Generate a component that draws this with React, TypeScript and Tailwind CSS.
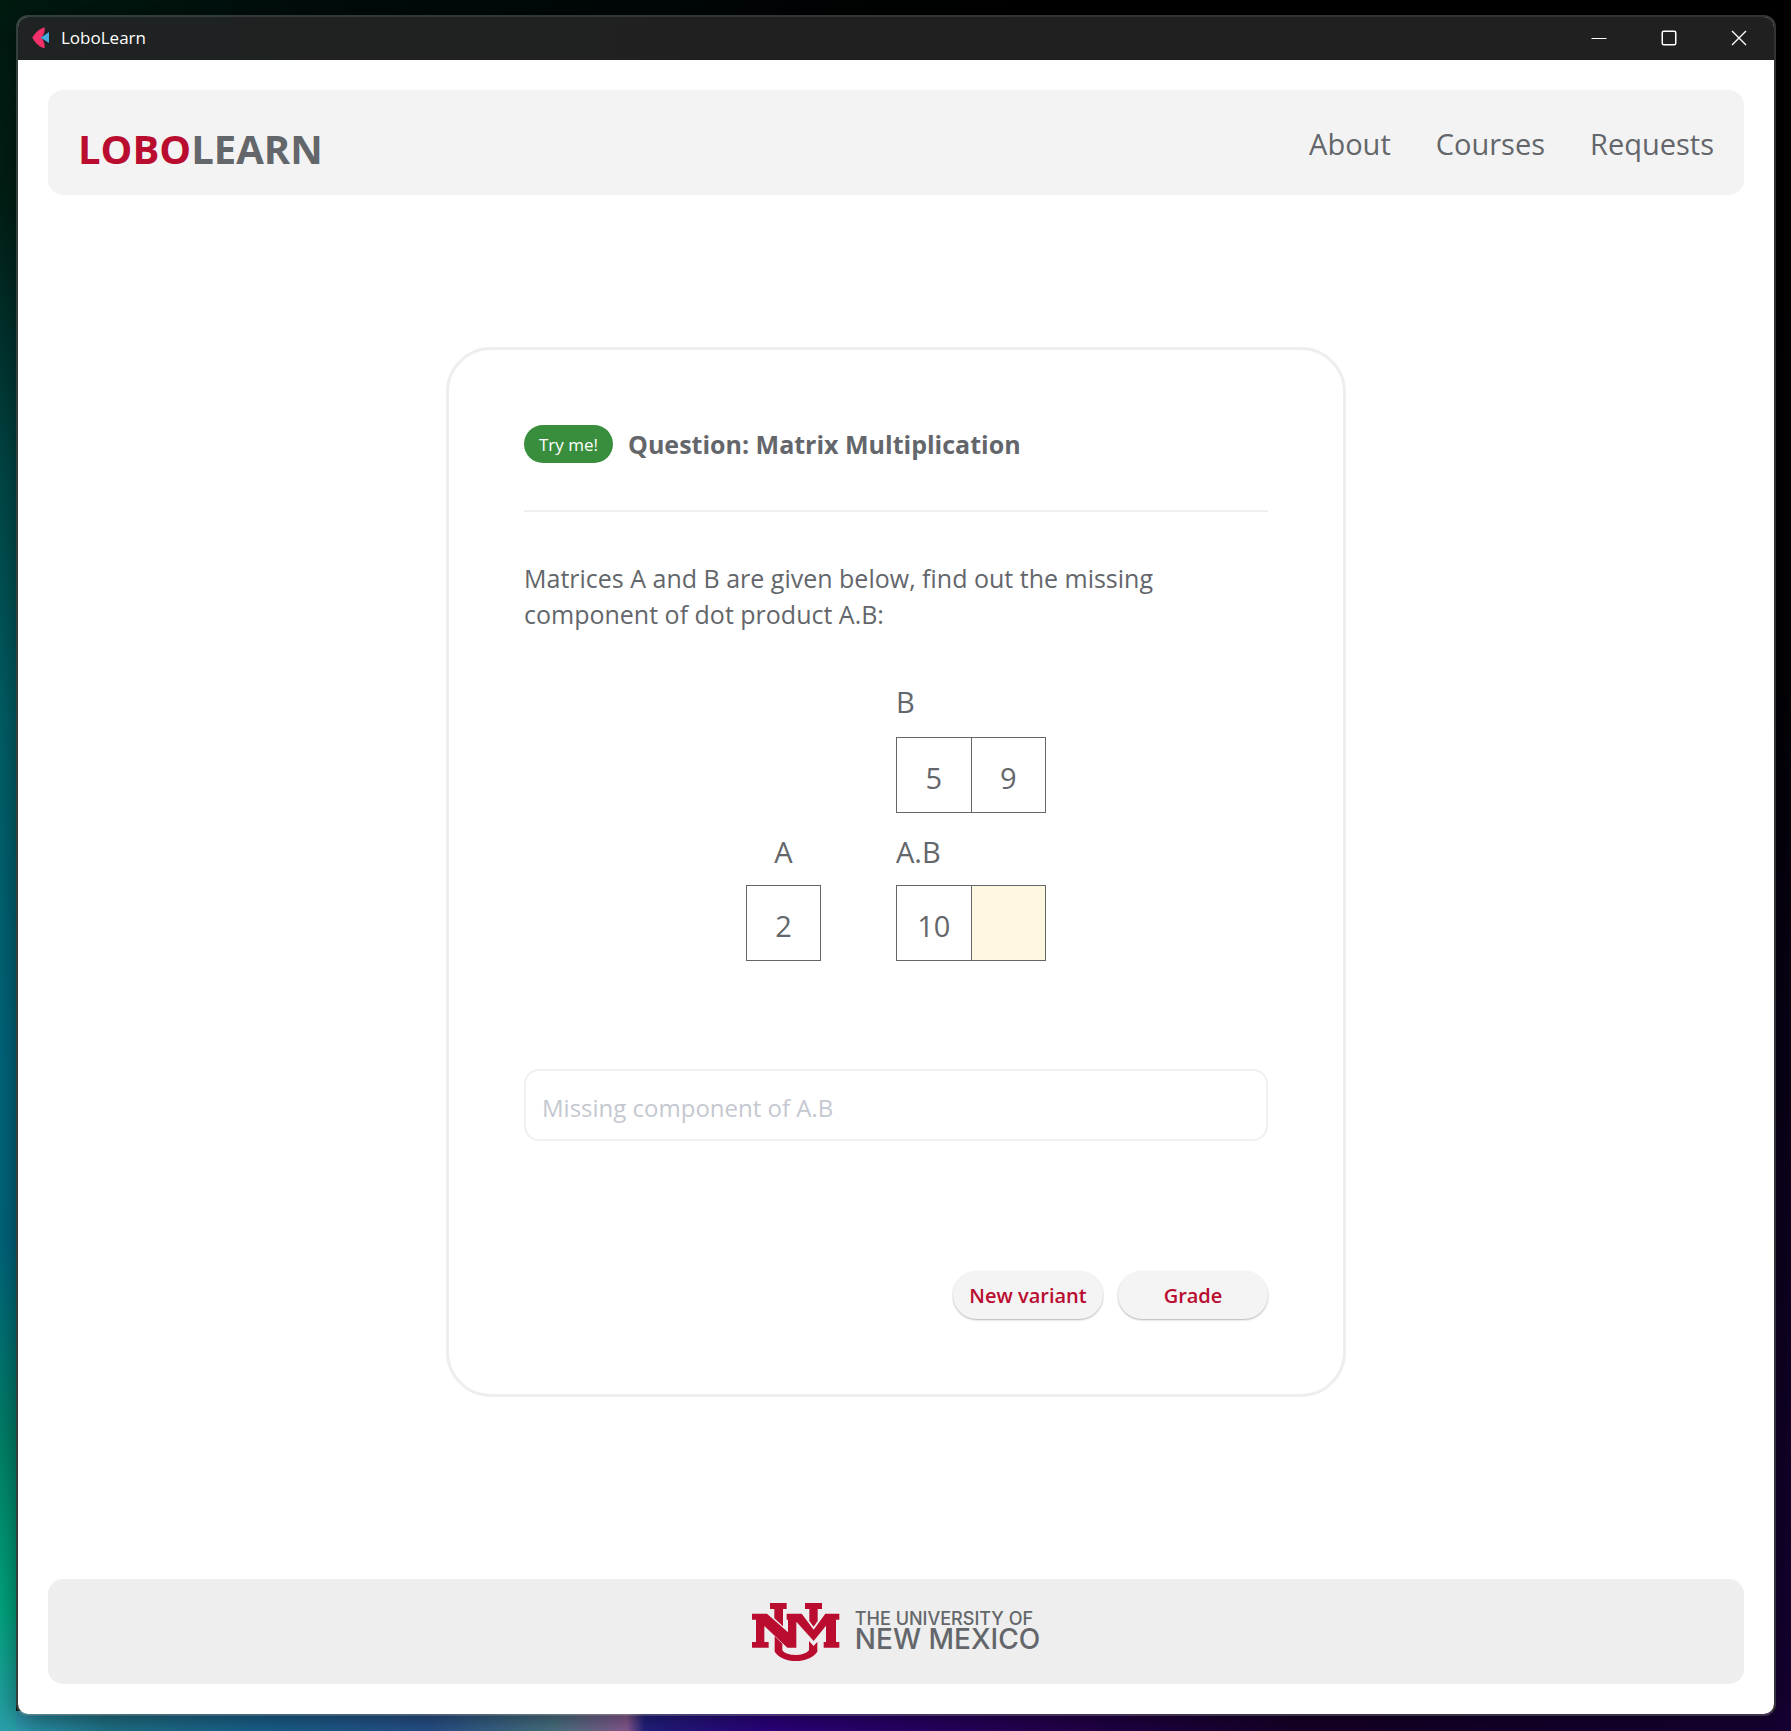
import { useState, type ReactNode } from "react";

const NAV_LINKS = ["About", "Courses", "Requests"];

function AppIcon() {
  return (
    <svg className="h-[22px] w-[18px]" viewBox="0 0 54 66" aria-hidden="true">
      <path d="M1 32C9 18 21 6 38 1C39 12 36 23 28 32C36 41 39 53 38 64C21 59 9 47 1 32Z" fill="#f2316b" />
      <path d="M26 32L51 15V48Z" fill="#45abdc" />
    </svg>
  );
}

function WindowButton({ label, children }: { label: string; children: ReactNode }) {
  return (
    <button type="button" aria-label={label} className="flex h-full w-[70px] items-center justify-center">
      <svg className="size-4" viewBox="0 0 16 16" fill="none" stroke="#ffffff" aria-hidden="true">
        {children}
      </svg>
    </button>
  );
}

function TitleBar() {
  return (
    <div className="flex h-[43px] items-center bg-linear-to-r from-[#1f2323] to-[#202020] to-40% pb-0.5 pl-3.5 text-white">
      <AppIcon />
      <span className="ml-[11px] text-[17px]">LoboLearn</span>
      <div className="ml-auto flex h-full">
        <WindowButton label="Minimize">
          <path d="M0.500 8.500H15.500" />
        </WindowButton>
        <WindowButton label="Maximize">
          <rect x="1.250" y="1.250" width="13.500" height="13.500" rx="1.500" strokeWidth="1.500" />
        </WindowButton>
        <WindowButton label="Close">
          <path d="M1 1L15 15M15 1L1 15" strokeWidth="1.400" />
        </WindowButton>
      </div>
    </div>
  );
}

function Header() {
  return (
    <header className="flex h-[105px] items-center justify-between rounded-[15px] bg-[#f3f3f3] px-[30px]">
      <h1 className="pt-3 text-[40px] leading-none font-bold">
        <span className="text-[#ba0c2f]">LOBO</span>LEARN
      </h1>
      <nav className="flex gap-[45px] pt-0.5 text-[29px]">
        {NAV_LINKS.map((name) => (
          <a key={name} href={"#" + name.toLowerCase()}>
            {name}
          </a>
        ))}
      </nav>
    </header>
  );
}

function Matrix({ label, cells }: { label: string; cells: (number | null)[] }) {
  return (
    <table aria-label={"Matrix " + label} className="border-collapse">
      <tbody>
        <tr>
          {cells.map((value, i) => (
            <td
              key={i}
              className={
                value === null
                  ? "size-[75px] border border-[#63666a] bg-[#fff8e1]"
                  : "size-[75px] border border-[#63666a] pt-1 text-center"
              }
            >
              {value}
            </td>
          ))}
        </tr>
      </tbody>
    </table>
  );
}

function Question() {
  const [answer, setAnswer] = useState("");
  return (
    <section className="w-full max-w-[900px] rounded-[45px] border-3 border-[#eeeeee] p-[75px]">
      <div className="flex items-center gap-[15px]">
        <span className="flex h-[38px] items-center rounded-full bg-[#388e3c] px-[15px] pt-0.5 text-[17px] text-white">
          Try me!
        </span>
        <h2 className="text-[25px] leading-9 font-bold">Question: Matrix Multiplication</h2>
      </div>
      <hr className="mt-[47px] border-t-2 border-[#f0f0f0]" />
      <p className="mt-12 text-[25px] leading-9">
        Matrices A and B are given below, find out the missing component of dot product A.B:
      </p>
      <div className="mx-auto mt-[30px] grid w-[300px] grid-cols-[75px_150px] justify-between text-[29px] leading-none">
        <div className="col-start-2 flex h-[75px] items-center pt-1">B</div>
        <div className="col-start-2">
          <Matrix label="B" cells={[5, 9]} />
        </div>
        <div className="flex h-[72px] items-center justify-center pt-1">A</div>
        <div className="flex h-[72px] items-center pt-1">A.B</div>
        <Matrix label="A" cells={[2]} />
        <Matrix label="A.B" cells={[10, null]} />
      </div>
      <input
        type="text"
        aria-label="Missing component of A.B"
        placeholder="Missing component of A.B"
        value={answer}
        onChange={(e) => setAnswer(e.target.value)}
        className="mt-[108px] block h-[72px] w-full rounded-[15px] border-2 border-[#f0f0f0] px-4 pt-1 text-2xl placeholder:text-[#c4c8d0]"
      />
      <div className="mt-[130px] flex justify-end gap-[15px] text-[20px] font-semibold text-[#ba0c2f]">
        <button type="button" className="h-12 w-[150px] rounded-full bg-[#f4f4f4] pt-0.5 shadow-[0_1px_2px_rgba(0,0,0,0.3)]">
          New variant
        </button>
        <button type="button" className="h-12 w-[150px] rounded-full bg-[#f4f4f4] pt-0.5 shadow-[0_1px_2px_rgba(0,0,0,0.3)]">
          Grade
        </button>
      </div>
    </section>
  );
}

function UnmMark() {
  return (
    <svg className="h-[58px] w-[88px]" viewBox="0 0 264 174" fill="#ba0c2f" aria-hidden="true">
      <path d="M54 0H104V18H93V70L67 46V18H54Z" />
      <path d="M159 0H210V18H197V54L185 71L172 54V18H159Z" />
      <path d="M0 32H45L108 88V50H104V32H149L185 80L220 32H262V50H252V117H262V134H215V117H222V68L185 114L133 56V134H106L37 69V117H50V134H0V117H12V50H0Z" />
      <path d="M68 100L91 122V142C99 152 113 156 131 156C149 156 162 152 171 142V114L185 129L196 116V146C182 165 158 174 131 174C104 174 82 165 68 146Z" />
    </svg>
  );
}

function Footer() {
  return (
    <footer className="flex h-[105px] items-center justify-center gap-[15px] rounded-[15px] bg-[#eeeeee]">
      <UnmMark />
      <div className="pb-1 font-[Inter,sans-serif] font-medium whitespace-nowrap">
        <div className="text-[18px] leading-[18px]">THE UNIVERSITY OF</div>
        <div className="text-[28px] leading-[22px]">NEW MEXICO</div>
      </div>
    </footer>
  );
}

export default function App() {
  return (
    <div className="flex min-h-screen flex-col bg-[linear-gradient(to_bottom,#001a10_0%,#001f16_12%,#004848_28%,#005f66_42%,#00657c_62%,#00647c_72%,#008068_83%,#00a57e_93%,#2a9eaa_100%),linear-gradient(to_right,#2f9fb5_0%,#20748a_6%,#1a6290_15%,#28528c_24%,#4a7484_31%,#8a5c94_35%,#222080_36%,#2c0080_43%,#260055_57%,#160028_73%,#160034_100%),linear-gradient(to_bottom,#000000_0%,#020006_40%,#160034_100%),linear-gradient(to_right,#001a10_0%,#000b0b_20%,#000000_60%)] bg-[size:16px_100%,100%_20px,16px_100%,100%_100%] bg-[position:left_top,left_bottom,right_top,left_top] bg-no-repeat py-[15px] pr-[15px] pl-4 font-['Open_Sans','Noto_Sans',sans-serif] text-[#63666a]">
      <div className="flex flex-1 flex-col overflow-hidden rounded-xl border-2 border-[#808080]/40 bg-white bg-clip-padding shadow-[0_4px_24px_rgba(0,0,0,0.45)]">
        <TitleBar />
        <div className="flex flex-1 flex-col p-[30px]">
          <Header />
          <main className="flex flex-1 flex-col items-center justify-center pb-[30px]">
            <Question />
          </main>
          <Footer />
        </div>
      </div>
    </div>
  );
}
